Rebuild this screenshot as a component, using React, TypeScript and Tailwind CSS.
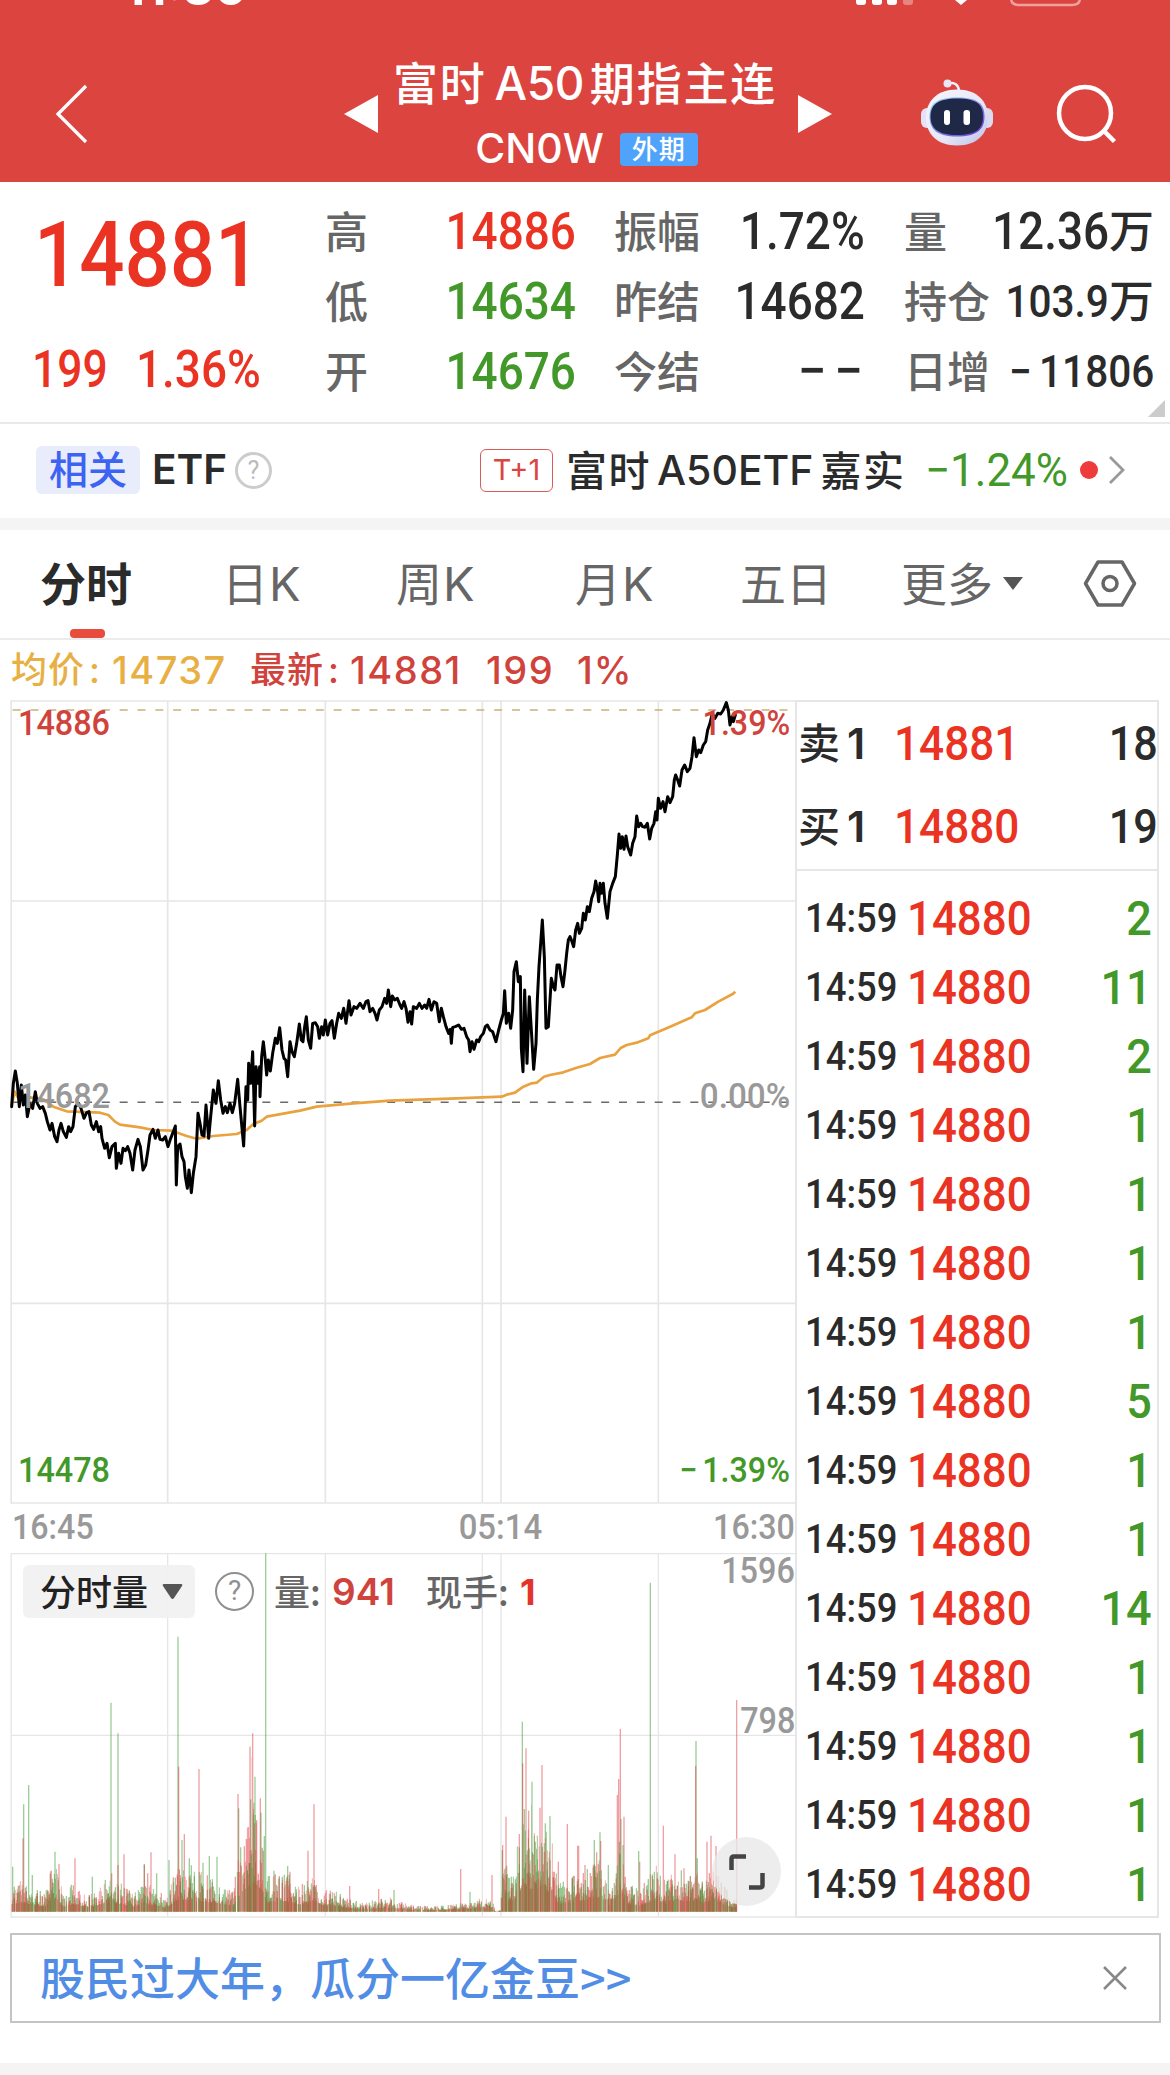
import React from "react";

interface QuoteItem {
  label: string;
  value: string;
  unit?: string;
  color: string;
  small?: boolean;
}

interface Trade {
  time: string;
  price: string;
  amount: string;
}

const highLow: QuoteItem[] = [
  { label: "高", value: "14886", color: "text-[#ea3323]" },
  { label: "低", value: "14634", color: "text-[#429828]" },
  { label: "开", value: "14676", color: "text-[#429828]" },
];

const settlement: QuoteItem[] = [
  { label: "振幅", value: "1.72%", color: "text-[#2b2b2b]" },
  { label: "昨结", value: "14682", color: "text-[#2b2b2b]" },
  { label: "今结", value: "--", color: "text-[#2b2b2b]" },
];

const volumes: QuoteItem[] = [
  { label: "量", value: "12.36", unit: "万", color: "text-[#2b2b2b]" },
  { label: "持仓", value: "103.9", unit: "万", color: "text-[#2b2b2b]", small: true },
  { label: "日增", value: "−11806", color: "text-[#2b2b2b]", small: true },
];

const trades: Trade[] = ["2", "11", "2", "1", "1", "1", "1", "5", "1", "1", "14", "1", "1", "1", "1"].map(
  (amount) => ({ time: "14:59", price: "14880", amount })
);

// Chart units are a third of a pixel
const pricePoints =
  "35,1250 40,1180 46,1143 52,1180 58,1250 64,1185 70,1245 76,1215 82,1280 90,1240 98,1255 106,1205 112,1240 120,1255 128,1250 136,1270 142,1295 150,1320 156,1300 164,1340 171,1355 177,1320 183,1300 190,1325 199,1342 206,1310 212,1325 219,1310 226,1250 236,1240 243,1255 252,1285 260,1268 267,1265 274,1305 281,1318 289,1295 296,1325 302,1310 306,1345 314,1375 321,1360 328,1403 336,1370 346,1360 349,1435 356,1390 363,1420 369,1375 376,1382 383,1370 390,1390 398,1440 405,1380 414,1348 421,1370 429,1440 437,1425 444,1380 450,1335 459,1318 466,1345 474,1320 480,1348 488,1350 496,1340 504,1370 512,1345 520,1325 526,1308 529,1485 533,1370 540,1362 546,1400 552,1415 556,1460 562,1495 567,1440 574,1508 580,1450 588,1400 594,1270 600,1300 606,1335 612,1338 618,1245 626,1345 632,1280 640,1200 648,1240 655,1172 662,1230 669,1270 676,1250 682,1268 690,1240 697,1268 704,1240 713,1168 720,1250 731,1368 738,1190 743,1230 746,1120 752,1180 758,1085 764,1308 768,1130 773,1180 779,1130 780,1220 785,1100 790,1055 796,1110 800,1155 805,1110 811,1143 818,1090 826,1045 832,1060 839,1013 846,1080 852,1105 857,1110 863,1160 870,1055 876,1085 883,1100 890,1060 898,1002 904,1050 909,1055 914,1010 919,980 925,1050 932,1075 938,1000 946,998 953,1010 958,1045 965,1010 970,1035 976,990 983,1035 990,1000 996,992 1003,1045 1010,1000 1016,970 1024,985 1031,955 1038,1000 1047,932 1053,975 1062,950 1070,955 1080,940 1090,955 1098,935 1104,932 1110,965 1118,955 1125,970 1131,990 1138,960 1146,950 1154,925 1160,940 1165,900 1172,950 1177,918 1184,930 1192,925 1200,945 1205,955 1212,935 1218,955 1224,997 1230,965 1235,1002 1240,950 1250,955 1258,940 1266,955 1274,945 1280,955 1287,928 1294,960 1302,935 1310,940 1318,995 1324,955 1330,980 1338,1010 1346,1030 1351,1018 1354,1060 1358,1012 1366,1010 1376,1005 1384,1018 1392,1015 1400,1040 1406,1050 1410,1085 1416,1055 1422,1078 1430,1050 1436,1055 1442,1040 1450,1030 1456,1010 1462,1005 1470,1020 1478,1025 1488,1055 1496,1020 1504,990 1510,970 1514,902 1519,1000 1526,970 1532,1015 1538,960 1542,845 1549,815 1555,875 1561,860 1564,1075 1569,1145 1574,900 1581,1120 1588,920 1594,1020 1601,1138 1608,1060 1612,930 1617,830 1622,760 1627,690 1633,800 1638,1015 1645,1010 1650,930 1654,865 1660,890 1665,900 1671,825 1678,825 1683,860 1689,890 1695,840 1700,790 1705,750 1710,740 1716,755 1721,770 1727,720 1733,700 1738,730 1745,715 1750,670 1756,690 1762,650 1768,665 1775,625 1782,605 1787,573 1793,605 1796,635 1800,580 1804,610 1810,580 1815,640 1822,685 1830,605 1838,580 1846,560 1852,495 1857,432 1862,475 1867,440 1872,478 1878,438 1883,470 1892,495 1898,460 1905,440 1910,378 1916,410 1922,400 1928,410 1935,412 1942,400 1949,447 1955,415 1962,400 1967,365 1971,390 1975,325 1982,355 1989,335 1995,365 2003,320 2010,338 2018,320 2023,270 2027,255 2033,270 2039,288 2046,240 2054,225 2062,245 2070,235 2076,200 2082,143 2089,200 2096,180 2102,188 2110,165 2117,155 2123,120 2130,100 2137,70 2145,85 2153,70 2162,72 2170,60 2179,38 2185,60 2190,105 2196,80 2200,95 2206,75";

const averagePoints =
  "35,1245 44,1205 55,1225 90,1222 130,1228 160,1250 200,1264 300,1268 325,1275 345,1295 360,1304 420,1312 460,1320 515,1322 560,1338 590,1346 640,1338 710,1332 740,1320 760,1302 785,1292 800,1280 900,1262 950,1250 1060,1240 1170,1232 1350,1226 1505,1220 1520,1214 1545,1208 1570,1190 1595,1180 1610,1178 1632,1160 1650,1155 1690,1147 1730,1133 1770,1122 1800,1104 1845,1094 1862,1074 1880,1065 1910,1058 1945,1045 1950,1036 2000,1015 2075,982 2085,970 2115,960 2155,935 2198,912 2206,905";

// [x, top] of the bars that stand out
const greenSpikes = [
  [38, 1280], [71, 1093], [86, 1035], [97, 1305], [165, 1235], [277, 1310], [316, 1320], [333, 788], [354, 880],
  [433, 1275], [470, 1300], [507, 1260], [534, 590], [546, 1200], [568, 1255], [609, 1268], [628, 1248], [651, 1250],
  [716, 1105], [722, 1222], [752, 1078], [762, 1088], [765, 1010], [783, 1118], [793, 1188], [797, 340], [822, 1292],
  [863, 1278], [1182, 1350], [1410, 1355], [1507, 1230], [1520, 1277], [1567, 845], [1573, 1107], [1596, 1025],
  [1595, 1095], [1636, 1150], [1650, 1128], [1783, 1200], [1800, 1177], [1825, 1275], [1863, 1137], [1869, 1215],
  [1916, 1233], [1951, 428], [2088, 903], [2092, 1255],
];
const redSpikes = [
  [69, 1195], [177, 1272], [225, 1255], [335, 1300], [354, 1275], [372, 1243], [433, 1272], [443, 1300], [453, 1237],
  [536, 980], [553, 1182], [597, 987], [714, 1062], [740, 1198], [750, 920], [758, 880], [757, 950], [770, 1140],
  [781, 1075], [790, 1232], [838, 1308], [870, 1295], [924, 1232], [942, 1093], [1049, 1338], [1136, 1347],
  [1382, 1287], [1476, 1305], [1508, 1215], [1518, 1130], [1568, 970], [1578, 925], [1586, 1112], [1620, 1103],
  [1626, 975], [1675, 1265], [1702, 1152], [1733, 1217], [1736, 1217], [1755, 1275], [1790, 1237], [1802, 1203],
  [1852, 1065], [1856, 1017], [1861, 867], [1872, 1130], [1919, 1265], [1990, 1157], [2025, 1243], [2052, 1285],
  [2087, 978], [2121, 1205], [2133, 1187], [2148, 1218], [2210, 780],
];

// [x, height] outline of the ordinary volume
const envelope = [
  [35, 80], [60, 90], [100, 70], [135, 50], [150, 110], [170, 120], [190, 50], [220, 80], [260, 40], [330, 100],
  [360, 80], [400, 50], [440, 80], [500, 40], [530, 120], [570, 130], [600, 110], [650, 90], [700, 60], [715, 160],
  [760, 300], [790, 210], [802, 100], [860, 110], [900, 70], [940, 100], [980, 60], [1010, 60], [1040, 40],
  [1080, 25], [1170, 40], [1230, 20], [1300, 14], [1400, 25], [1450, 40], [1480, 40], [1484, 4], [1503, 4],
  [1505, 130], [1540, 110], [1570, 280], [1600, 230], [1640, 220], [1660, 190], [1675, 80], [1740, 110],
  [1800, 150], [1830, 70], [1860, 200], [1880, 80], [1920, 60], [1970, 130], [2000, 80], [2030, 130], [2060, 100],
  [2090, 130], [2110, 90], [2140, 120], [2190, 50], [2212, 30],
];

const BASE = 1415;

const volumeAt = (x: number) => {
  const i = Math.max(1, envelope.findIndex((p) => p[0] >= x));
  const [x0, h0] = envelope[i - 1];
  const [x1, h1] = envelope[i];
  return h0 + ((h1 - h0) * (x - x0)) / (x1 - x0);
};

const barPath = (seed: number, spikes: number[][]) => {
  let s = seed;
  const rand = () => {
    s = (s * 16807) % 2147483647;
    return s / 2147483647;
  };
  let d = "";
  for (let x = 37; x < 2210; x += 3) {
    const r = rand();
    if (rand() < 0.3) continue;
    const h = volumeAt(x) * (0.28 + 0.82 * r * r);
    d += `M${x} ${BASE}V${(BASE - h).toFixed(0)}`;
  }
  spikes.forEach(([x, top]) => {
    d += `M${x} ${BASE}V${top}`;
  });
  return d;
};

const StatusBar: React.FC = () => (
  <div className="h-[8px] overflow-hidden flex justify-between pl-[124px] pr-[88px]">
    <span className="-mt-[41px] h-[49px] font-['Inter'] font-bold text-[49px] leading-[57px]">11:30</span>
    <svg className="w-[226px] h-[8px]" viewBox="857 0 226 8">
      <path d="M857 0h10v2q0 3-3 3h-4q-3 0-3-3zM873 0h10v2q0 3-3 3h-4q-3 0-3-3zM888 0h10v2q0 3-3 3h-4q-3 0-3-3z" fill="#fff" />
      <path d="M904 0h10v2q0 3-3 3h-4q-3 0-3-3z" fill="#fff" opacity=".35" />
      <path d="M956 0h12l-6 5z" fill="#fff" />
      <path d="M1012 -6v4q0 7 8 7h53q8 0 8-7v-4" fill="none" stroke="#fff" strokeWidth="2.5" opacity=".5" />
    </svg>
  </div>
);

const RobotIcon: React.FC = () => (
  <svg className="w-[72px] h-[68px]" viewBox="0 0 72 68">
    <defs>
      <linearGradient id="shell" x1="0" y1="0" x2="1" y2="1">
        <stop offset="0" stopColor="#f8f7fd" />
        <stop offset=".6" stopColor="#e6e6f6" />
        <stop offset="1" stopColor="#b7bfe6" />
      </linearGradient>
      <linearGradient id="visor" x1="0" y1="0" x2="1" y2="1">
        <stop offset="0" stopColor="#8ad8f0" />
        <stop offset="1" stopColor="#6a35d8" />
      </linearGradient>
    </defs>
    <path d="M27 5c6-3 11 1 11 8" fill="none" stroke="#f1effa" strokeWidth="2.6" />
    <circle cx="26.500" cy="4.500" r="4" fill="#e9e7f6" />
    <rect x="0" y="29" width="14" height="20" rx="6" fill="#e4e2f4" />
    <rect x="58" y="29" width="14" height="20" rx="6" fill="#dcdaf0" />
    <path d="M36 10.500C57 10.500 67 23 67 38.500S57 66.500 36 66.500 5 54 5 38.500 15 10.500 36 10.500z" fill="url(#shell)" />
    <path d="M36 18.500c20 0 27.500 6 27.500 19S56 57.500 36 57.500 8.500 50.500 8.500 37.500 16 18.500 36 18.500z" fill="url(#visor)" />
    <path d="M36 19.500c19 0 26 5.500 26 18S55 56 36 56 9.500 49.500 9.500 37.500 17 19.500 36 19.500z" fill="#202848" />
    <rect x="23" y="31" width="6" height="15" rx="3" fill="#fff" />
    <rect x="42.500" y="31" width="6.500" height="15" rx="3" fill="#fff" />
  </svg>
);

const Header: React.FC = () => (
  <header className="h-[182px] bg-[#dc4440] text-white">
    <StatusBar />
    <div className="h-[174px] flex">
      <svg className="mt-[75px] ml-[54px] w-[36px] h-[62px]" viewBox="0 0 36 62">
        <path d="M32 3L4 31l28 28" fill="none" stroke="#fff" strokeWidth="3.300" />
      </svg>
      <svg className="mt-[87px] ml-[254px] w-[34px] h-[38px]" viewBox="0 0 34 38">
        <path d="M0 19L34 0v38z" fill="#fff" />
      </svg>
      <div className="w-[420px] flex flex-col items-center">
        <div className="mt-[42px] mr-[6px] h-[64px] flex items-center whitespace-nowrap font-['Noto_Sans_CJK_SC',sans-serif] font-medium text-[45px] leading-[64px] tracking-[1.800px]">
          <span>富时</span>
          <span className="ml-[8px] mr-[6px] mt-[1px] font-['Inter'] text-[46px] tracking-[-0.500px]">A50</span>
          <span>期指主连</span>
        </div>
        <div className="mt-[9px] mr-[3px] h-[50px] flex items-center">
          <span className="font-['Inter'] font-medium text-[41px] leading-[50px]">CN0W</span>
          <span className="ml-[16px] w-[78px] h-[33px] mt-[2px] rounded-[4px] bg-[#4fa3fb] text-center font-['Noto_Sans_CJK_SC',sans-serif] font-medium text-[26px] leading-[29px] tracking-[1px]">
            外期
          </span>
        </div>
      </div>
      <svg className="mt-[87px] w-[34px] h-[38px]" viewBox="0 0 34 38">
        <path d="M34 19L0 0v38z" fill="#fff" />
      </svg>
      <div className="mt-[71px] ml-[89px]">
        <RobotIcon />
      </div>
      <svg className="mt-[74px] ml-[62px] w-[64px] h-[64px]" viewBox="1055 82 64 64">
        <circle cx="1085" cy="113" r="26" fill="none" stroke="#fff" strokeWidth="4.500" />
        <path d="M1104 131l10.500 10.500" stroke="#fff" strokeWidth="4.500" />
      </svg>
    </div>
  </header>
);

const QuoteValue: React.FC<{ item: QuoteItem }> = ({ item }) => {
  if (item.value === "--") {
    return (
      <span className="mr-[2px] flex gap-[8px] font-['Roboto'] font-medium text-[51px] leading-[66px] text-[#2b2b2b]">
        <span>−</span>
        <span>−</span>
      </span>
    );
  }
  const negative = item.value.startsWith("−");
  return (
    <span className={`flex items-center ${item.color}`}>
      <span
        className={`mt-[1px] inline-block origin-right scale-x-[0.9] font-['Roboto'] font-medium leading-[70px] ${
          item.small ? "text-[45px]" : "text-[51px]"
        }`}
      >
        {negative && <span className="mr-[8px]">−</span>}
        {negative ? item.value.slice(1) : item.value}
      </span>
      {item.unit && (
        <span className="-mt-[4px] font-['Noto_Sans_CJK_SC',sans-serif] font-medium text-[45px] leading-[66px]">{item.unit}</span>
      )}
    </span>
  );
};

const QuoteColumn: React.FC<{ items: QuoteItem[]; className: string }> = ({ items, className }) => (
  <div className={`flex flex-col mt-[14px] ${className}`}>
    {items.map((item) => (
      <div key={item.label} className="h-[70px] flex justify-between items-center whitespace-nowrap">
        <span className="-mt-[4px] font-['Noto_Sans_CJK_SC',sans-serif] font-medium text-[43px] leading-[66px] text-[#666]">
          {item.label}
        </span>
        <QuoteValue item={item} />
      </div>
    ))}
  </div>
);

const Quote: React.FC = () => (
  <section className="relative h-[242px] flex border-b-2 border-[#e9e9e9]">
    <div className="w-[325px] pl-[32px] whitespace-nowrap font-['Roboto'] font-medium text-[#ea3323]">
      <div className="h-[100px] mt-[23px] ml-[2px] origin-left scale-x-[0.875] text-[91px] leading-[100px]">14881</div>
      <div className="mt-[35px] h-[60px] flex text-[51px] leading-[60px]">
        <span className="w-[104px] origin-left scale-x-[0.87]">199</span>
        <span className="origin-left scale-x-[0.9]">1.36%</span>
      </div>
    </div>
    <QuoteColumn items={highLow} className="w-[251px]" />
    <QuoteColumn items={settlement} className="w-[251px] ml-[38px]" />
    <QuoteColumn items={volumes} className="w-[250px] ml-[39px]" />
    <svg className="absolute right-[5px] bottom-[5px] w-[17px] h-[17px]" viewBox="0 0 17 17">
      <path d="M17 0v17H0z" fill="#ccc" />
    </svg>
  </section>
);

const RelatedEtf: React.FC = () => (
  <section className="h-[94px] pb-[2px] flex items-center whitespace-nowrap text-[#2b2b2b]">
    <span className="ml-[36px] w-[104px] h-[48px] rounded-[6px] bg-[#e8ecfb] text-center font-['Noto_Sans_CJK_SC',sans-serif] font-medium text-[39px] leading-[43px] text-[#3d63f2]">
      相关
    </span>
    <span className="ml-[12px] w-[83px] font-['Inter'] font-semibold text-[40.500px]">ETF</span>
    <span className="w-[37px] h-[37px] rounded-full border-[3px] border-[#ccc] text-center font-['Roboto'] text-[25px] leading-[31px] text-[#bbb]">
      ?
    </span>
    <span className="ml-[208px] w-[73px] h-[43px] rounded-[6px] border-[1.500px] border-[#dc5a5a] text-center font-['Inter'] text-[29px] leading-[40px] text-[#dc4440]">
      T+1
    </span>
    <span className="-mt-[4px] ml-[13px] w-[359px] flex items-center font-['Noto_Sans_CJK_SC',sans-serif] font-medium text-[41px] leading-[56px] tracking-[1.500px]">
      富时
      <span className="ml-[6px] mr-[7px] mt-[4px] font-['Inter'] text-[41px] tracking-normal">A50ETF</span>
      嘉实
    </span>
    <span className="w-[142px] origin-left scale-x-[0.955] font-['Roboto'] text-[46px] text-[#429828]">−1.24%</span>
    <span className="ml-[13px] w-[18px] h-[18px] rounded-full bg-[#ee3b3b]" />
    <svg className="ml-[9px] w-[20px] h-[30px]" viewBox="0 0 20 30">
      <path d="M3 2l13 13L3 28" fill="none" stroke="#999" strokeWidth="2.800" />
    </svg>
  </section>
);

const Tabs: React.FC = () => (
  <nav className="h-[110px] flex border-b-2 border-[#ebeced] whitespace-nowrap font-['Noto_Sans_CJK_SC',sans-serif] text-[46px] leading-[103px] text-[#666]">
    <div className="ml-[40px] w-[187px] flex flex-col">
      <span className="h-[99px] font-bold text-[#2b2b2b]">分时</span>
      <span className="ml-[30px] w-[35px] h-[9px] rounded-[4px] bg-[#e74c3c]" />
    </div>
    <span className="w-[174px] -ml-[5px]">
      日<span className="ml-[1px] font-['Inter'] text-[47px]">K</span>
    </span>
    <span className="w-[179px]">
      周<span className="ml-[1px] font-['Inter'] text-[47px]">K</span>
    </span>
    <span className="w-[165px]">
      月<span className="ml-[1px] font-['Inter'] text-[47px]">K</span>
    </span>
    <span className="w-[161px]">五日</span>
    <span className="w-[102px]">更多</span>
    <svg className="mt-[47px] w-[20px] h-[13px]" viewBox="0 0 20 13">
      <path d="M0 0h20L10 13z" fill="#555" />
    </svg>
    <svg className="mt-[29px] ml-[60px] w-[54px] h-[49px]" viewBox="0 0 54 49">
      <path d="M15 3h24l12.500 21.500L39 46H15L2.500 24.500z" fill="none" stroke="#666" strokeWidth="3.500" strokeLinejoin="round" />
      <circle cx="27" cy="24.500" r="7" fill="none" stroke="#666" strokeWidth="3.500" />
    </svg>
  </nav>
);

const Legend: React.FC = () => (
  <div className="h-[60px] pl-[11px] flex items-center whitespace-nowrap font-['Noto_Sans_CJK_SC',sans-serif] font-medium text-[#d0433c]">
    <span className="-mt-[4px] w-[101px] text-[36px] leading-[54px] tracking-[1px] text-[#e8b044]">
      均价<span className="ml-[4px] font-['Inter']">:</span>
    </span>
    <span className="w-[138px] font-['Inter'] text-[38px] tracking-[1.500px] text-[#e8b044]">14737</span>
    <span className="-mt-[4px] w-[100px] text-[36px] leading-[54px] tracking-[1px]">
      最新<span className="ml-[4px] font-['Inter']">:</span>
    </span>
    <span className="w-[136px] font-['Inter'] text-[38px] tracking-[1.500px]">14881</span>
    <span className="w-[91px] font-['Inter'] text-[38px] tracking-[1.500px]">199</span>
    <span className="font-['Inter'] text-[38px] tracking-[1px]">1%</span>
  </div>
);

const PriceChart: React.FC = () => (
  <div className="relative h-[804px] font-['Roboto'] font-medium text-[35px] leading-[40px]">
    <svg className="w-[785px] h-[804px]" viewBox="30 30 2355 2412">
      <g stroke="#e6e6e6" strokeWidth="5" fill="none">
        <path d="M32 33H2385M32 2439H2385M33.500 31V2441" />
        <path d="M35 633H2385M35 1840H2385M503 34V2439M976 34V2439M1447 34V2439M1503 34V2439M1975 34V2439" />
      </g>
      <path d="M38 60H2384" stroke="#c9b179" strokeWidth="4" strokeDasharray="24 29.500" />
      <path d="M38 1237H2384" stroke="#6b6b6b" strokeWidth="4.500" strokeDasharray="24 29.500" />
      <polyline points={averagePoints} fill="none" stroke="#e9a23f" strokeWidth="8" strokeLinejoin="round" />
      <polyline points={pricePoints} fill="none" stroke="#000" strokeWidth="9" strokeLinejoin="round" strokeLinecap="round" />
    </svg>
    <span className="absolute left-[8px] top-[4px] origin-left scale-x-[0.925] text-[#d0433c]">14886</span>
    <span className="absolute right-[5px] top-[4px] origin-right scale-x-[0.92] text-[#d0433c]">1.39%</span>
    <span className="absolute left-[8px] top-[377px] origin-left scale-x-[0.925] text-[#999]">14682</span>
    <span className="absolute right-[5px] top-[377px] origin-right scale-x-[0.95] text-[#999]">0.00%</span>
    <span className="absolute left-[8px] top-[751px] origin-left scale-x-[0.925] text-[#429828]">14478</span>
    <span className="absolute right-[5px] top-[751px] origin-right scale-x-[0.92] text-[#429828]">
      <span className="mr-[5px]">−</span>1.39%
    </span>
  </div>
);

const TimeAxis: React.FC = () => (
  <div className="h-[49px] pl-[2px] flex justify-between font-['Roboto'] font-medium text-[35px] leading-[48px] text-[#999]">
    <span className="origin-left scale-x-[0.92]">16:45</span>
    <span className="ml-[194px] scale-x-[0.94]">05:14</span>
    <span className="origin-right scale-x-[0.92]">16:30</span>
  </div>
);

const VolumeChart: React.FC = () => (
  <div className="relative h-[365px]">
    <svg className="w-[785px] h-[365px]" viewBox="30 339 2355 1095">
      <g stroke="#e6e6e6" strokeWidth="4" fill="none">
        <path d="M32 341H2385M32 1431H2385M33.500 339V1434M35 886H2385" />
        <path d="M503 341V1431M976 341V1431M1447 341V1431M1503 341V1431M1975 341V1431" />
      </g>
      <path d={barPath(4711, greenSpikes)} stroke="#3f9b35" strokeOpacity=".5" strokeWidth="4" />
      <path d={barPath(977, redSpikes)} stroke="#e0383c" strokeOpacity=".48" strokeWidth="4" />
      <path d={barPath(31, [])} stroke="#3f9b35" strokeOpacity=".55" strokeWidth="3" />
      <path d={barPath(52711, [])} stroke="#e0383c" strokeOpacity=".4" strokeWidth="3" />
    </svg>
    <div className="absolute left-[13px] top-[12px] h-[53px] flex items-center whitespace-nowrap font-['Noto_Sans_CJK_SC',sans-serif] font-medium text-[36px] leading-[48px] text-[#666]">
      <div className="w-[172px] h-[53px] pl-[17px] flex items-center rounded-[6px] bg-[#f1f1f1]/90 text-[#222]">
        <span className="-mt-[3px]">分时量</span>
        <svg className="ml-[14px] w-[21px] h-[16px]" viewBox="0 0 21 16">
          <path d="M2 0h17q2 0 1 2l-8 12q-1.500 2-3 0L1 2q-1-2 1-2z" fill="#555" />
        </svg>
      </div>
      <span className="ml-[20px] w-[39px] h-[39px] rounded-full border-[2.500px] border-[#8f8f8f] text-center font-['Roboto'] font-normal text-[28px] leading-[34px] text-[#8f8f8f]">
        ?
      </span>
      <span className="-mt-[3px] ml-[20px] w-[58px]">量:</span>
      <span className="w-[94px] font-['Inter'] font-semibold text-[37px] text-[#d0433c]">941</span>
      <span className="-mt-[3px] w-[94px]">现手:</span>
      <span className="font-['Inter'] font-bold text-[#e5322d]">1</span>
    </div>
    <span className="absolute right-0 top-[-2px] origin-right scale-x-[0.9] font-['Roboto'] font-medium text-[36px] leading-[40px] text-[#999]">1596</span>
    <span className="absolute right-0 top-[148px] origin-right scale-x-[0.9] font-['Roboto'] font-medium text-[36px] leading-[40px] text-[#999]">798</span>
    <div className="absolute left-[702px] top-[284px] w-[69px] h-[69px] flex items-center justify-center rounded-full bg-[#e8e8e8]/80">
      <svg className="w-[36px] h-[36px]" viewBox="0 0 36 36">
        <path d="M2.500 16V5q0-2.500 2.500-2.500h12M33.500 19v12q0 2.500-2.500 2.500H20" fill="none" stroke="#444" strokeWidth="4.500" />
      </svg>
    </div>
  </div>
);

const OrderBook: React.FC = () => (
  <div className="w-[364px] border-2 border-[#e6e6e6] whitespace-nowrap font-['Roboto'] font-medium">
    <div className="h-[169px] border-b-2 border-[#e6e6e6] text-[#2b2b2b]">
      {[
        { side: "卖", price: "14881", amount: "18" },
        { side: "买", price: "14880", amount: "19" },
      ].map((row) => (
        <div key={row.side} className="h-[83px] flex items-center leading-[83px]">
          <span className="-mt-[6px] pl-[1px] w-[50px] font-['Noto_Sans_CJK_SC',sans-serif] text-[42px] leading-[77px]">{row.side}</span>
          <span className="w-[47px] font-['Inter'] font-semibold text-[43px]">1</span>
          <span className="origin-left scale-x-[0.9] text-[49px] text-[#ea3323]">{row.price}</span>
          <span className="-mr-[1px] ml-auto origin-right scale-x-[0.88] text-[49px]">{row.amount}</span>
        </div>
      ))}
    </div>
    <div className="pt-[13px]">
      {trades.map((trade, index) => (
        <div key={index} className="h-[69px] pl-[8px] pr-[5px] flex items-center leading-[69px]">
          <span className="w-[102px] origin-left scale-x-[0.91] text-[40px] text-[#2b2b2b]">{trade.time}</span>
          <span className="origin-left scale-x-[0.895] text-[49px] text-[#ea3323]">{trade.price}</span>
          <span className="ml-auto origin-right scale-x-[0.92] text-[49px] text-[#429828]">{trade.amount}</span>
        </div>
      ))}
    </div>
  </div>
);

const Banner: React.FC = () => (
  <div className="mt-[15px] ml-[10px] w-[1151px] h-[90px] flex items-center justify-between border-2 border-[#c4c4c4] pl-[28px] pr-[32px]">
    <span className="-mt-[2px] whitespace-nowrap font-['Noto_Sans_CJK_SC',sans-serif] font-medium text-[45px] leading-[80px] text-[#528de5]">
      股民过大年，瓜分一亿金豆&gt;&gt;
    </span>
    <svg className="w-[24px] h-[24px]" viewBox="0 0 24 24">
      <path d="M1 1l22 22M23 1L1 23" stroke="#888" strokeWidth="2.5" />
    </svg>
  </div>
);

const App: React.FC = () => {
  return (
    <div className="w-[1170px] h-[2075px] overflow-hidden flex flex-col bg-white">
      <Header />
      <Quote />
      <RelatedEtf />
      <div className="h-[12px] bg-[#f4f4f4]" />
      <Tabs />
      <Legend />

      {/* Chart and order book */}
      <div className="h-[1218px] pl-[10px] flex">
        <div className="w-[785px]">
          <PriceChart />
          <TimeAxis />
          <VolumeChart />
        </div>
        <OrderBook />
      </div>

      <Banner />
      <div className="mt-auto h-[12px] bg-[#f4f4f4]" />
    </div>
  );
};

export default App;
